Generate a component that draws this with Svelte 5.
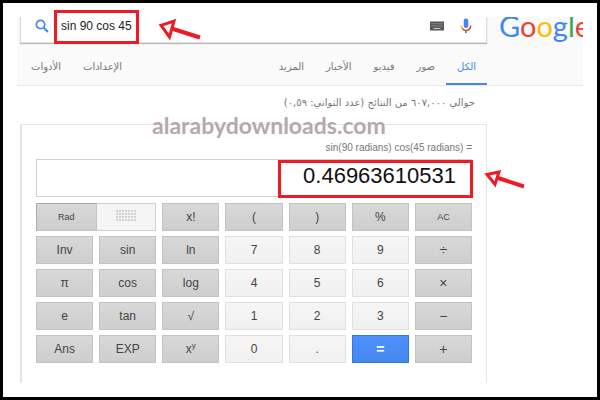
<script>
    let query = $state('sin 90 cos 45')

    const tabs = ['الكل', 'صور', 'فيديو', 'الأخبار', 'المزيد']
    const tools = ['الإعدادات', 'الأدوات']

    const logo = [
        ['G', 'blue'],
        ['o', 'red'],
        ['o', 'yellow'],
        ['g', 'blue'],
        ['l', 'green'],
        ['e', 'red'],
    ]

    // the first row starts after the Rad / keypad switch
    const keys = [
        'x!', '(', ')', '%', 'AC',
        'Inv', 'sin', 'ln', '7', '8', '9', '÷',
        'π', 'cos', 'log', '4', '5', '6', '×',
        'e', 'tan', '√', '1', '2', '3', '−',
        'Ans', 'EXP', 'xy', '0', '.', '=', '+',
    ]

    const dots = [0, 1, 2, 3, 4, 5, 6]
    const dotRows = [0, 1, 2, 3]

    function kind(key) {
        if (key === '=') return 'equals'
        if (/^[0-9.]$/.test(key)) return 'digit'
        if (key === 'AC') return 'small'
        if ('÷×−+'.includes(key)) return 'operator'
        return ''
    }
</script>

<div class="frame">
    <header>
        <div class="column">
            <form class="search" onsubmit={(e) => e.preventDefault()}>
                <button class="icon" aria-label="بحث">
                    <svg width="14" height="14" viewBox="0 0 14 14">
                        <circle cx="5.5" cy="5.5" r="4.2" fill="none" stroke="#4285f4" stroke-width="1.7" />
                        <path d="M8.5 8.5L13 13" stroke="#4285f4" stroke-width="2" />
                    </svg>
                </button>
                <input type="text" aria-label="بحث" bind:value={query} />
                <button class="icon" type="button" aria-label="لوحة المفاتيح">
                    <svg width="14" height="10" viewBox="0 0 14 10">
                        <rect width="14" height="9" y="0.5" fill="#555" />
                        <path d="M1.5 2.7h11M1.5 5h11" stroke="#bbb" stroke-dasharray="1 1" />
                        <path d="M3.5 7.5h7" stroke="#ccc" />
                    </svg>
                </button>
                <button class="icon mic" type="button" aria-label="بحث صوتي">
                    <svg width="12" height="16" viewBox="0 0 12 16">
                        <rect x="3.7" y="0.5" width="4.6" height="9.5" rx="2.3" fill="#4285f4" />
                        <path d="M1.3 7.5a4.7 4.7 0 0 0 1.4 3.5" fill="none" stroke="#fbbc05" stroke-width="1.5" />
                        <path d="M2.5 10.8a4.7 4.7 0 0 0 8.2-3.3" fill="none" stroke="#ea4335" stroke-width="1.5" />
                        <path d="M6 12.5V15" stroke="#34a853" stroke-width="1.8" />
                    </svg>
                </button>
                <span class="mark mark-query"></span>
                <svg class="arrow arrow-query" width="44" height="26" viewBox="0 0 44 26">
                    <path d="M12 11L42 20.5" stroke="#ed1c24" stroke-width="4" />
                    <path d="M3 8.3L16 4L11.5 20Z" fill="#fff" stroke="#ed1c24" stroke-width="3" />
                </svg>
            </form>
            <nav dir="rtl">
                {#each tabs as tab, i}
                    <a href="#{tab}" class:active={i === 0}>{tab}</a>
                {/each}
                <span class="spacer"></span>
                {#each tools as tool}
                    <a href="#{tool}">{tool}</a>
                {/each}
            </nav>
        </div>
        <a class="logo" href="#home">
            {#each logo as [letter, color]}<span class={color}>{letter}</span>{/each}
        </a>
    </header>

    <main>
        <p class="stats" dir="rtl">حوالي ٦٠٧,٠٠٠ من النتائج (عدد الثواني: ٠,٥٩)</p>
        <section class="card">
            <span class="watermark">alarabydownloads.com</span>
            <div class="expression">sin(90 radians) cos(45 radians) =</div>
            <div class="display">
                <output>0.46963610531</output>
                <span class="mark mark-result"></span>
                <svg class="arrow arrow-result" width="44" height="24" viewBox="0 0 44 24">
                    <path d="M12 9L41 18.5" stroke="#ed1c24" stroke-width="4" />
                    <path d="M4 6.5L16 4L12 16.5Z" fill="#fff" stroke="#ed1c24" stroke-width="3" />
                </svg>
            </div>
            <div class="keys">
                <div class="switch">
                    <button class="rad">Rad</button>
                    <button class="pad" aria-label="لوحة الأرقام">
                        <svg width="20" height="11" viewBox="0 0 20 11">
                            {#each dotRows as row}
                                {#each dots as dot}
                                    <rect x={dot * 3} y={row * 3} width="2" height="2" fill="#d0d0d0" />
                                {/each}
                            {/each}
                        </svg>
                    </button>
                </div>
                {#each keys as key}
                    <button class={kind(key)}>
                        {#if key === 'xy'}
                            x<sup>y</sup>
                        {:else}
                            {key}
                        {/if}
                    </button>
                {/each}
            </div>
        </section>
    </main>
</div>

<style>
    :global(body) {
        margin: 0;
        background: #fff;
    }
    .frame {
        box-sizing: border-box;
        min-height: 100vh;
        border: 3px solid #000;
        padding: 14px;
        background: #fff;
        font-family: 'Liberation Sans', 'DejaVu Sans', Arial, sans-serif;
        color: #444;
    }
    button {
        font-family: inherit;
        cursor: pointer;
    }
    header {
        display: grid;
        grid-template-columns: 1fr 84px;
        column-gap: 12px;
        height: 68px;
        padding-left: 3px;
        background: #fafafa;
        border-bottom: 1px solid #e8e8e8;
    }
    .column {
        display: flex;
        flex-direction: column;
    }
    .search {
        position: relative;
        display: flex;
        align-items: center;
        box-sizing: border-box;
        height: 26px;
        padding: 0 14px;
        padding-bottom: 7px;
        background: #fff;
        border: 1px solid #ddd;
        border-top: none;
        box-shadow: 0 1px 1px #bbb;
    }
    .search input {
        flex: 1;
        min-width: 0;
        margin: 0 12px;
        padding: 0;
        border: none;
        outline: none;
        background: none;
        font: 12px 'Liberation Sans', Arial, sans-serif;
        color: #222;
    }
    .icon {
        display: flex;
        padding: 0;
        border: none;
        background: none;
    }
    .mic {
        margin-left: 16px;
    }
    nav {
        display: flex;
        flex: 1;
        font: 10px 'DejaVu Sans', sans-serif;
    }
    nav a {
        padding: 18px 11px 0;
        color: #777;
        text-decoration: none;
    }
    nav a.active {
        border-bottom: 2px solid #4285f4;
        color: #4285f4;
    }
    .spacer {
        flex: 1;
    }
    .logo {
        overflow: hidden;
        font: 29px/18px Lato, sans-serif;
        text-decoration: none;
        white-space: nowrap;
    }
    .blue {
        color: #4285f4;
    }
    .red {
        color: #ea4335;
    }
    .yellow {
        color: #fbbc05;
    }
    .green {
        color: #34a853;
    }
    main {
        padding-left: 3px;
        padding-right: 96px;
    }
    .stats {
        margin: 0;
        padding: 10px 12px 14px;
        font: 10px/14px 'DejaVu Sans', sans-serif;
        color: #777;
    }
    .card {
        position: relative;
        padding: 16px 14px 20px;
        border: 1px solid #e6e6e6;
        border-left-width: 2px;
        border-bottom: none;
    }
    .watermark {
        position: absolute;
        top: -12px;
        left: 130px;
        font: bold 23px/24px Lato, sans-serif;
        color: #b5a9a9;
    }
    .expression {
        padding-bottom: 4px;
        text-align: right;
        font-size: 10px;
        line-height: 14px;
        color: #777;
    }
    .display {
        position: relative;
        box-sizing: border-box;
        height: 38px;
        padding: 3px 15px;
        border: 1px solid #d0d0d0;
        text-align: right;
    }
    .display output {
        font-size: 22px;
        line-height: 26px;
        color: #111;
    }
    .mark {
        position: absolute;
        box-sizing: border-box;
        border: 3px solid #ed1c24;
        pointer-events: none;
    }
    .mark-query {
        top: -7px;
        left: 33px;
        width: 85px;
        height: 34px;
    }
    .mark-result {
        top: 0;
        right: -2px;
        width: 195px;
        height: 38px;
    }
    .arrow {
        position: absolute;
        pointer-events: none;
    }
    .arrow-query {
        top: 0;
        left: 137px;
    }
    .arrow-result {
        top: 8px;
        right: -56px;
    }
    .keys {
        display: grid;
        grid-template-columns: repeat(7, 1fr);
        gap: 5px 6px;
        margin-top: 6px;
    }
    .keys button {
        box-sizing: border-box;
        min-width: 0;
        height: 28px;
        padding: 0;
        border: 1px solid #c3c3c3;
        background: linear-gradient(#d8d8d8, #cecece);
        font-size: 12px;
        line-height: 14px;
        color: #444;
    }
    .keys .digit {
        border-color: #e0e0e0;
        background: linear-gradient(#f6f6f6, #f0f0f0);
    }
    .keys .operator {
        font-size: 14px;
    }
    .keys .small {
        font-size: 9px;
    }
    .keys .equals {
        border-color: #2f78ec;
        background: linear-gradient(#4d90fe, #4787ed);
        font-size: 14px;
        font-weight: bold;
        color: #fff;
    }
    .switch {
        grid-column: span 2;
        display: flex;
    }
    .keys .switch button {
        flex: 1;
    }
    .keys .switch .rad {
        border-color: #aaa #c3c3c3 #c3c3c3 #aaa;
        font-size: 9px;
    }
    .keys .switch .pad {
        border-color: #d0d0d0;
        border-left: none;
        background: #f5f5f5;
    }
    sup {
        font-size: 8px;
        line-height: 0;
    }
</style>
